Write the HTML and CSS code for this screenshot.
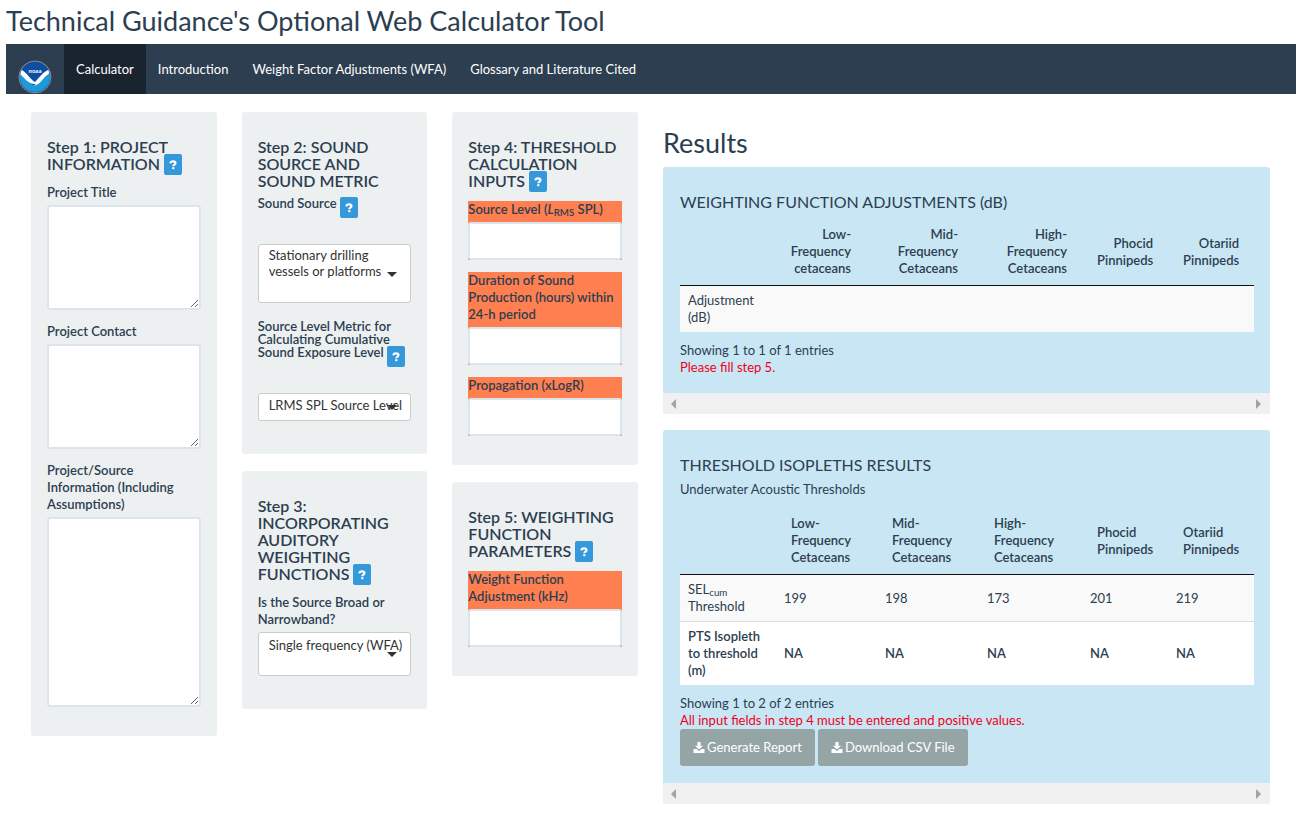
FILE: index.html
```html
<!DOCTYPE html>
<html lang="en">
<head>
<meta charset="utf-8">
<title>Technical Guidance's Optional Web Calculator Tool</title>
<link rel="stylesheet" href="styles.css">
</head>
<body>
<svg class="sprite" aria-hidden="true">
  <symbol id="question" viewBox="0 0 8 10">
    <path d="M1.300 3.400C1.500 1.800 2.500 1.400 4 1.400c1.600 0 2.500.6 2.500 1.800 0 1.500-2.200 1.400-2.200 3" fill="none" stroke="currentColor" stroke-width="2.100"/>
    <path d="M3.200 7.200h2.200v2H3.200z" fill="currentColor"/>
  </symbol>
  <symbol id="download" viewBox="0 0 12 12">
    <path d="M4.300 0h3.400v4h2.700L6 8.300 1.600 4h2.700z" fill="currentColor"/>
    <path d="M0 7.600h3.400L6 10l2.600-2.400H12V12H0z" fill="currentColor"/>
  </symbol>
</svg>

<header>
  <h1 class="title">Technical Guidance's Optional Web Calculator Tool</h1>
  <nav class="navbar">
    <a class="brand" href="#" aria-label="NOAA">
      <svg viewBox="0 0 34 34">
        <defs><clipPath id="disc"><circle cx="17" cy="17" r="15"/></clipPath></defs>
        <circle cx="17" cy="17" r="16" fill="#405468" stroke="#7d90a2" stroke-width="1"/>
        <g clip-path="url(#disc)">
          <path d="M0 0h34v34H0z" fill="#0b4ea2"/>
          <path d="M0 11l16 15 18-15v23H0z" fill="#1b9bdc"/>
          <path d="M0 9l4 1c5 3 8 9 13 12 4-4 7-9 13-12l4-1c-1 4-5 6-8 9-3 4-6 7-11 8l3-2C10 25 5 16 0 12z" fill="#fff"/>
        </g>
        <text class="brand-text" x="17" y="13" text-anchor="middle">noaa</text>
      </svg>
    </a>
    <a class="nav-link active" href="#">Calculator</a>
    <a class="nav-link" href="#">Introduction</a>
    <a class="nav-link" href="#">Weight Factor Adjustments (WFA)</a>
    <a class="nav-link" href="#">Glossary and Literature Cited</a>
  </nav>
</header>

<main class="content">
  <div class="column">
    <section class="well">
      <h2 class="step">Step 1: PROJECT INFORMATION <button class="help" aria-label="Help"><svg><use href="#question"/></svg></button></h2>
      <div class="field"><label for="ptitle">Project Title</label><textarea id="ptitle"></textarea></div>
      <div class="field"><label for="pcontact">Project Contact</label><textarea id="pcontact"></textarea></div>
      <div class="field"><label for="pinfo">Project/Source Information (Including Assumptions)</label><textarea id="pinfo" class="tall"></textarea></div>
    </section>
  </div>

  <div class="column">
    <section class="well">
      <h2 class="step snug">Step 2: SOUND SOURCE AND SOUND METRIC</h2>
      <div class="choice">
        <div class="caption"><label for="source">Sound Source</label> <button class="help" aria-label="Help"><svg><use href="#question"/></svg></button></div>
        <div class="select large"><select id="source"><option>Stationary drilling vessels or platforms</option></select></div>
      </div>
      <div class="choice">
        <div class="caption"><label for="metric">Source Level Metric for Calculating Cumulative Sound Exposure Level</label> <button class="help" aria-label="Help"><svg><use href="#question"/></svg></button></div>
        <div class="select"><select id="metric"><option>LRMS SPL Source Level</option></select></div>
      </div>
    </section>
    <section class="well">
      <h2 class="step">Step 3: INCORPORATING AUDITORY WEIGHTING FUNCTIONS <button class="help" aria-label="Help"><svg><use href="#question"/></svg></button></h2>
      <div class="choice">
        <label for="band">Is the Source Broad or Narrowband?</label>
        <div class="select medium"><select id="band"><option>Single frequency (WFA)</option></select></div>
      </div>
    </section>
  </div>

  <div class="column">
    <section class="well">
      <h2 class="step">Step 4: THRESHOLD CALCULATION INPUTS <button class="help" aria-label="Help"><svg><use href="#question"/></svg></button></h2>
      <div class="field required"><label for="level">Source Level (<i>L</i><sub>RMS</sub> SPL)</label><input id="level" type="text"></div>
      <div class="field required"><label for="duration">Duration of Sound Production (hours) within 24-h period</label><input id="duration" type="text"></div>
      <div class="field required"><label for="propagation">Propagation (xLogR)</label><input id="propagation" type="text"></div>
    </section>
    <section class="well">
      <h2 class="step">Step 5: WEIGHTING FUNCTION PARAMETERS <button class="help" aria-label="Help"><svg><use href="#question"/></svg></button></h2>
      <div class="field required"><label for="wfa">Weight Function Adjustment (kHz)</label><input id="wfa" type="text"></div>
    </section>
  </div>

  <div class="column results">
    <h2 class="results-title">Results</h2>
    <section class="panel">
      <div class="panel-body">
        <h3 class="panel-title">WEIGHTING FUNCTION ADJUSTMENTS (dB)</h3>
        <table class="table numeric">
          <colgroup><col class="w80"><col class="w106"><col class="w107"><col class="w109"><col class="w86"><col class="w86"></colgroup>
          <thead><tr><th></th><th>Low-Frequency cetaceans</th><th>Mid-Frequency Cetaceans</th><th>High-Frequency Cetaceans</th><th>Phocid Pinnipeds</th><th>Otariid Pinnipeds</th></tr></thead>
          <tbody><tr><td>Adjustment (dB)</td><td></td><td></td><td></td><td></td><td></td></tr></tbody>
        </table>
        <p class="info">Showing 1 to 1 of 1 entries</p>
        <p class="error">Please fill step 5.</p>
      </div>
      <div class="scrollbar"><span class="arrow left"></span><span class="arrow right"></span></div>
    </section>
    <section class="panel">
      <div class="panel-body">
        <h3 class="panel-title">THRESHOLD ISOPLETHS RESULTS</h3>
        <p class="subtitle">Underwater Acoustic Thresholds</p>
        <table class="table">
          <colgroup><col class="w96"><col class="w101"><col class="w102"><col class="w103"><col class="w86"><col class="w86"></colgroup>
          <thead><tr><th></th><th>Low-Frequency Cetaceans</th><th>Mid-Frequency Cetaceans</th><th>High-Frequency Cetaceans</th><th>Phocid Pinnipeds</th><th>Otariid Pinnipeds</th></tr></thead>
          <tbody>
            <tr><td>SEL<sub>cum</sub> Threshold</td><td>199</td><td>198</td><td>173</td><td>201</td><td>219</td></tr>
            <tr class="strong"><td>PTS Isopleth to threshold (m)</td><td>NA</td><td>NA</td><td>NA</td><td>NA</td><td>NA</td></tr>
          </tbody>
        </table>
        <p class="info">Showing 1 to 2 of 2 entries</p>
        <p class="error">All input fields in step 4 must be entered and positive values.</p>
        <div class="actions">
          <button class="btn"><svg><use href="#download"/></svg>Generate Report</button>
          <button class="btn"><svg><use href="#download"/></svg>Download CSV File</button>
        </div>
      </div>
      <div class="scrollbar"><span class="arrow left"></span><span class="arrow right"></span></div>
    </section>
  </div>
</main>
</body>
</html>
```
FILE: styles.css
```css
* { box-sizing: border-box; }
body {
  margin: 0;
  padding: 0 8px 8px 6px;
  font: 13px/17px Lato, "Liberation Sans", sans-serif;
  color: #2c3e50;
  background: #fff;
}
h1, h2, h3, p { margin: 0; font-weight: 400; }
button, input, select, textarea { font: inherit; color: inherit; }
.sprite { display: none; }

.title { font-size: 27px; line-height: 28px; padding: 7px 0 9px; }
.navbar { display: flex; height: 50px; background: #2c3e50; }
.brand { width: 58px; padding: 16px 12px 0; overflow: hidden; }
.brand svg { display: block; width: 34px; height: 34px; }
.brand-text { font: 700 6px Lato, sans-serif; fill: #fff; }
.nav-link { padding: 0 12px; line-height: 50px; color: #fff; text-decoration: none; }
.nav-link.active { background: #1a242f; }

.content {
  display: grid;
  grid-template-columns: repeat(6, minmax(0, 1fr));
  gap: 25px;
  align-items: start;
  padding: 18px 26px 0 25px;
}
.column { display: flex; flex-direction: column; gap: 17px; }
.results { grid-column: span 3; gap: 16px; }

.well { padding: 26px 16px 16px; background: #ecf0f1; border-radius: 3px; }
.step { font-size: 16px; line-height: 17px; font-weight: 600; margin-bottom: 12px; }
.step.snug { margin-bottom: 8px; }
.help {
  display: inline-flex;
  align-items: center;
  justify-content: center;
  width: 18px;
  height: 21px;
  margin: -1px 0 -8px;
  padding: 0;
  vertical-align: top;
  color: #fff;
  background: #3498db;
  border: 0;
  border-radius: 2px;
}
.help svg { width: 8px; height: 10px; }

label { font-weight: 600; }
.field { margin-bottom: 13px; }
.field label, .choice > label { display: block; margin-bottom: 4px; }
.field textarea, .field input {
  display: block;
  width: 100%;
  padding: 8px;
  background: #fff;
  border: 2px solid #dce4ec;
  border-radius: 3px;
}
.field textarea { height: 105px; resize: vertical; }
.field textarea.tall { height: 190px; }
.field input { height: 38px; }
.required { background: #ff7f50; margin-bottom: 12px; }
.required:last-child { margin-bottom: 13px; }
sub { font-size: 75%; line-height: 0; vertical-align: -2px; }

.choice { margin-bottom: 17px; }
.caption { line-height: 13px; padding-bottom: 34px; }
.caption .help { margin-top: 0; }
.select { position: relative; height: 28px; }
.select select {
  appearance: none;
  display: block;
  width: 100%;
  height: 100%;
  padding: 2px 0 6px 10px;
  line-height: 16px;
  white-space: normal;
  color: #333;
  background: #fff;
  border: 1px solid #ccc;
  border-radius: 3px;
}
.select.medium { height: 44px; }
.select.large { height: 59px; }
.select.medium select { padding-bottom: 20px; }
.select.large select { padding-bottom: 23px; }
.select::after {
  content: "";
  position: absolute;
  right: 14px;
  top: 50%;
  margin-top: -2px;
  border: 5px solid transparent;
  border-top-color: #333;
  border-bottom: 0;
  pointer-events: none;
}

.results-title { font-size: 27px; line-height: 28px; padding-top: 17px; margin-bottom: -6px; }
.panel { background: #c9e6f4; border-radius: 3px; overflow: hidden; }
.panel-body { padding: 26px 16px 17px 17px; }
.panel-title { font-size: 16px; line-height: 17px; margin-bottom: 8px; }
.subtitle { margin-bottom: 9px; }
.table { width: 100%; table-layout: fixed; border-collapse: separate; border-spacing: 0; margin-bottom: 10px; }
.table th { padding: 8px 15px; font-weight: 600; text-align: left; border-bottom: 1px solid #111; }
.table td { padding: 6px 8px; background: #fff; }
.table tbody tr:first-child td { background: #f9f9f9; }
.table tbody tr + tr td { border-top: 1px solid #ddd; }
.numeric th { text-align: right; }
.strong { font-weight: 600; }
.w80 { width: 80px; }
.w86 { width: 86px; }
.w96 { width: 96px; }
.w101 { width: 101px; }
.w102 { width: 102px; }
.w103 { width: 103px; }
.w106 { width: 106px; }
.w107 { width: 107px; }
.w109 { width: 109px; }
.error { color: #f00020; }
.actions { display: flex; gap: 3px; }
.btn {
  display: flex;
  align-items: center;
  gap: 2px;
  height: 37px;
  padding: 0 13px;
  color: #fff;
  background: #95a5a6;
  border: 0;
  border-radius: 3px;
}
.btn svg { width: 12px; height: 11px; }
.scrollbar { display: flex; justify-content: space-between; align-items: center; height: 21px; padding: 0 9px 0 8px; background: #f0f0f0; }
.arrow { border: 5px solid transparent; }
.arrow.left { border-right-color: #a3a3a3; border-left: 0; }
.arrow.right { border-left-color: #a3a3a3; border-right: 0; }
```
